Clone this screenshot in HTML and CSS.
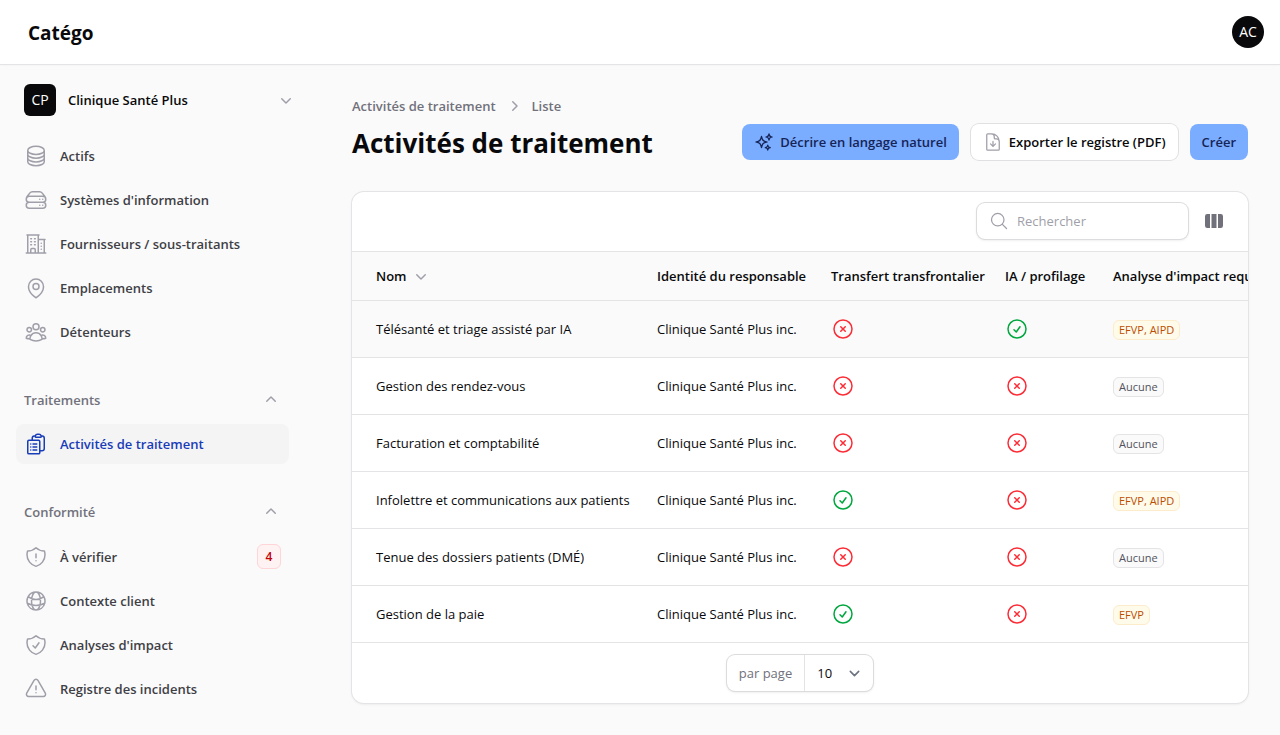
FILE: index.html
```html
<!DOCTYPE html>
<html lang="fr">
<head>
    <meta charset="UTF-8">
    <meta name="viewport" content="width=device-width, initial-scale=1.0">
    <title>Activités de traitement - Catégo</title>
    <link rel="stylesheet" href="styles.css">
</head>
<body>

    <!-- Icons -->
    <svg class="sprite" aria-hidden="true">
        <symbol id="i-stack" viewBox="0 0 24 24"><path d="M20.25 6.375c0 2.278-3.694 4.125-8.25 4.125S3.75 8.653 3.75 6.375m16.5 0c0-2.278-3.694-4.125-8.25-4.125S3.75 4.097 3.75 6.375m16.5 0v11.25c0 2.278-3.694 4.125-8.25 4.125s-8.25-1.847-8.25-4.125V6.375m16.5 0v3.75m-16.5-3.75v3.75m16.5 0v3.75C20.25 16.153 16.556 18 12 18s-8.25-1.847-8.25-4.125v-3.75m16.5 0c0 2.278-3.694 4.125-8.25 4.125s-8.25-1.847-8.25-4.125"/></symbol>
        <symbol id="i-server" viewBox="0 0 24 24"><path d="M5.25 14.25h13.5m-13.5 0a3 3 0 0 1-3-3m3 3a3 3 0 1 0 0 6h13.5a3 3 0 1 0 0-6m-16.5-3a3 3 0 0 1 3-3h13.5a3 3 0 0 1 3 3m-19.5 0a4.5 4.5 0 0 1 .9-2.7L5.737 5.1a3.375 3.375 0 0 1 2.7-1.35h7.126c1.062 0 2.062.5 2.7 1.35l2.587 3.45a4.5 4.5 0 0 1 .9 2.7m0 0a3 3 0 0 1-3 3m0 3h.008v.008h-.008v-.008Zm0-6h.008v.008h-.008v-.008Zm-3 6h.008v.008h-.008v-.008Zm0-6h.008v.008h-.008v-.008Z"/></symbol>
        <symbol id="i-building" viewBox="0 0 24 24"><path d="M2.25 21h19.5m-18-18v18m10.5-18v18m6-13.5V21M6.75 6.75h.75m-.75 3h.75m-.75 3h.75m3-6h.75m-.75 3h.75m-.75 3h.75M6.75 21v-3.375c0-.621.504-1.125 1.125-1.125h2.25c.621 0 1.125.504 1.125 1.125V21M3 3h12m-.75 4.5H21m-3.75 3.75h.008v.008h-.008v-.008Zm0 3h.008v.008h-.008v-.008Zm0 3h.008v.008h-.008v-.008Z"/></symbol>
        <symbol id="i-pin" viewBox="0 0 24 24"><path d="M15 10.5a3 3 0 1 1-6 0 3 3 0 0 1 6 0Z"/><path d="M19.5 10.5c0 7.142-7.5 11.25-7.5 11.25S4.5 17.642 4.5 10.5a7.5 7.5 0 1 1 15 0Z"/></symbol>
        <symbol id="i-users" viewBox="0 0 24 24"><path d="M18 18.72a9.094 9.094 0 0 0 3.741-.479 3 3 0 0 0-4.682-2.72m.94 3.198.001.031c0 .225-.012.447-.037.666A11.944 11.944 0 0 1 12 21c-2.17 0-4.207-.576-5.963-1.584A6.062 6.062 0 0 1 6 18.719m12 0a5.971 5.971 0 0 0-.941-3.197m0 0A5.995 5.995 0 0 0 12 12.75a5.995 5.995 0 0 0-5.058 2.772m0 0a3 3 0 0 0-4.681 2.72 8.986 8.986 0 0 0 3.74.477m.94-3.197a5.971 5.971 0 0 0-.94 3.197M15 6.75a3 3 0 1 1-6 0 3 3 0 0 1 6 0Zm6 3a2.25 2.25 0 1 1-4.5 0 2.25 2.25 0 0 1 4.5 0Zm-13.5 0a2.25 2.25 0 1 1-4.5 0 2.25 2.25 0 0 1 4.5 0Z"/></symbol>
        <symbol id="i-clipboard" viewBox="0 0 24 24"><path d="M9 12h3.75M9 15h3.75M9 18h3.75m3 .75H18a2.25 2.25 0 0 0 2.25-2.25V6.108c0-1.135-.845-2.098-1.976-2.192a48.424 48.424 0 0 0-1.123-.08m-5.801 0c-.065.21-.1.433-.1.664 0 .414.336.75.75.75h4.5a.75.75 0 0 0 .75-.75 2.25 2.25 0 0 0-.1-.664m-5.8 0A2.251 2.251 0 0 1 13.5 2.25H15c1.012 0 1.867.668 2.15 1.586m-5.8 0c-.376.023-.75.05-1.124.08C9.095 4.01 8.25 4.973 8.25 6.108V8.25m0 0H4.875c-.621 0-1.125.504-1.125 1.125v11.25c0 .621.504 1.125 1.125 1.125h9.75c.621 0 1.125-.504 1.125-1.125V9.375c0-.621-.504-1.125-1.125-1.125H8.25ZM6.75 12h.008v.008H6.75V12Zm0 3h.008v.008H6.75V15Zm0 3h.008v.008H6.75V18Z"/></symbol>
        <symbol id="i-shield-alert" viewBox="0 0 24 24"><path d="M12 9v3.75m0-10.036A11.959 11.959 0 0 1 3.598 6 11.99 11.99 0 0 0 3 9.75c0 5.592 3.824 10.29 9 11.622 5.176-1.332 9-6.03 9-11.622 0-1.31-.21-2.57-.598-3.75h-.152c-3.196 0-6.1-1.249-8.25-3.286Zm0 13.036h.008v.008H12v-.008Z"/></symbol>
        <symbol id="i-globe" viewBox="0 0 24 24"><path d="M12 21a9.004 9.004 0 0 0 8.716-6.747M12 21a9.004 9.004 0 0 1-8.716-6.747M12 21c2.485 0 4.5-4.03 4.5-9S14.485 3 12 3m0 18c-2.485 0-4.5-4.03-4.5-9S9.515 3 12 3m0 0a8.997 8.997 0 0 1 7.843 4.582M12 3a8.997 8.997 0 0 0-7.843 4.582m15.686 0A11.953 11.953 0 0 1 12 10.5c-2.998 0-5.74-1.1-7.843-2.918m15.686 0A8.959 8.959 0 0 1 21 12c0 .778-.099 1.533-.284 2.253m0 0A17.919 17.919 0 0 1 12 16.5c-3.162 0-6.133-.815-8.716-2.247m0 0A9.015 9.015 0 0 1 3 12c0-1.605.42-3.113 1.157-4.418"/></symbol>
        <symbol id="i-shield-check" viewBox="0 0 24 24"><path d="M9 12.75 11.25 15 15 9.75m-3-7.036A11.959 11.959 0 0 1 3.598 6 11.99 11.99 0 0 0 3 9.749c0 5.592 3.824 10.29 9 11.623 5.176-1.332 9-6.03 9-11.622 0-1.31-.21-2.571-.598-3.751h-.152c-3.196 0-6.1-1.248-8.25-3.285Z"/></symbol>
        <symbol id="i-warning" viewBox="0 0 24 24"><path d="M12 9v3.75m-9.303 3.376c-.866 1.5.217 3.374 1.948 3.374h14.71c1.73 0 2.813-1.874 1.948-3.374L13.949 3.378c-.866-1.5-3.032-1.5-3.898 0L2.697 16.126ZM12 15.75h.007v.008H12v-.008Z"/></symbol>
        <symbol id="i-sparkles" viewBox="0 0 24 24"><path d="M9.813 15.904 9 18.75l-.813-2.846a4.5 4.5 0 0 0-3.09-3.09L2.25 12l2.846-.813a4.5 4.5 0 0 0 3.09-3.09L9 5.25l.813 2.846a4.5 4.5 0 0 0 3.09 3.09L15.75 12l-2.846.813a4.5 4.5 0 0 0-3.09 3.09ZM18.259 8.715 18 9.75l-.259-1.035a3.375 3.375 0 0 0-2.455-2.456L14.25 6l1.036-.259a3.375 3.375 0 0 0 2.455-2.456L18 2.25l.259 1.035a3.375 3.375 0 0 0 2.456 2.456L21.75 6l-1.035.259a3.375 3.375 0 0 0-2.456 2.456ZM16.894 20.567 16.5 21.75l-.394-1.183a2.25 2.25 0 0 0-1.423-1.423L13.5 18.75l1.183-.394a2.25 2.25 0 0 0 1.423-1.423l.394-1.183.394 1.183a2.25 2.25 0 0 0 1.423 1.423l1.183.394-1.183.394a2.25 2.25 0 0 0-1.423 1.423Z"/></symbol>
        <symbol id="i-download" viewBox="0 0 24 24"><path d="M19.5 14.25v-2.625a3.375 3.375 0 0 0-3.375-3.375h-1.5A1.125 1.125 0 0 1 13.5 7.125v-1.5a3.375 3.375 0 0 0-3.375-3.375H8.25m.75 12 3 3m0 0 3-3m-3 3v-6m-1.5-9H5.625c-.621 0-1.125.504-1.125 1.125v17.25c0 .621.504 1.125 1.125 1.125h12.75c.621 0 1.125-.504 1.125-1.125V11.25a9 9 0 0 0-9-9Z"/></symbol>
        <symbol id="i-search" viewBox="0 0 24 24"><path d="m21 21-5.197-5.197m0 0A7.5 7.5 0 1 0 5.196 5.196a7.5 7.5 0 0 0 10.607 10.607Z"/></symbol>
        <symbol id="i-check" viewBox="0 0 24 24"><path d="M9 12.75 11.25 15 15 9.75M21 12a9 9 0 1 1-18 0 9 9 0 0 1 18 0Z"/></symbol>
        <symbol id="i-cross" viewBox="0 0 24 24"><path d="m9.75 9.75 4.5 4.5m0-4.5-4.5 4.5M21 12a9 9 0 1 1-18 0 9 9 0 0 1 18 0Z"/></symbol>
        <symbol id="i-columns" viewBox="0 0 20 20"><path d="M14 17h2.75A2.25 2.25 0 0 0 19 14.75v-9.5A2.25 2.25 0 0 0 16.75 3H14v14ZM12.5 3h-5v14h5V3ZM3.25 3H6v14H3.25A2.25 2.25 0 0 1 1 14.75v-9.5A2.25 2.25 0 0 1 3.25 3Z"/></symbol>
        <symbol id="i-down" viewBox="0 0 20 20"><path d="M5.22 8.22a.75.75 0 0 1 1.06 0L10 11.94l3.72-3.72a.75.75 0 1 1 1.06 1.06l-4.25 4.25a.75.75 0 0 1-1.06 0L5.22 9.28a.75.75 0 0 1 0-1.06Z"/></symbol>
        <symbol id="i-up" viewBox="0 0 20 20"><path d="M9.47 6.47a.75.75 0 0 1 1.06 0l4.25 4.25a.75.75 0 1 1-1.06 1.06L10 8.06l-3.72 3.72a.75.75 0 0 1-1.06-1.06l4.25-4.25Z"/></symbol>
        <symbol id="i-right" viewBox="0 0 20 20"><path d="M8.22 5.22a.75.75 0 0 1 1.06 0l4.25 4.25a.75.75 0 0 1 0 1.06l-4.25 4.25a.75.75 0 0 1-1.06-1.06L11.94 10 8.22 6.28a.75.75 0 0 1 0-1.06Z"/></symbol>
    </svg>

    <header class="topbar">
        <a class="logo" href="#">Catégo</a>
        <button class="avatar" type="button">AC</button>
    </header>

    <div class="layout">
        <aside class="sidebar">
            <button class="tenant" type="button">
                <span class="tenant-logo">CP</span>
                <span class="tenant-name">Clinique Santé Plus</span>
                <svg class="icon-sm"><use href="#i-down"/></svg>
            </button>

            <nav class="nav">
                <div class="nav-group">
                    <a class="nav-item" href="#"><svg class="icon"><use href="#i-stack"/></svg>Actifs</a>
                    <a class="nav-item" href="#"><svg class="icon"><use href="#i-server"/></svg>Systèmes d'information</a>
                    <a class="nav-item" href="#"><svg class="icon"><use href="#i-building"/></svg>Fournisseurs / sous-traitants</a>
                    <a class="nav-item" href="#"><svg class="icon"><use href="#i-pin"/></svg>Emplacements</a>
                    <a class="nav-item" href="#"><svg class="icon"><use href="#i-users"/></svg>Détenteurs</a>
                </div>

                <div class="nav-group">
                    <button class="nav-label" type="button">Traitements<svg class="icon-sm"><use href="#i-up"/></svg></button>
                    <a class="nav-item active" href="#"><svg class="icon"><use href="#i-clipboard"/></svg>Activités de traitement</a>
                </div>

                <div class="nav-group">
                    <button class="nav-label" type="button">Conformité<svg class="icon-sm"><use href="#i-up"/></svg></button>
                    <a class="nav-item" href="#"><svg class="icon"><use href="#i-shield-alert"/></svg>À vérifier<span class="count">4</span></a>
                    <a class="nav-item" href="#"><svg class="icon"><use href="#i-globe"/></svg>Contexte client</a>
                    <a class="nav-item" href="#"><svg class="icon"><use href="#i-shield-check"/></svg>Analyses d'impact</a>
                    <a class="nav-item" href="#"><svg class="icon"><use href="#i-warning"/></svg>Registre des incidents</a>
                </div>
            </nav>
        </aside>

        <main class="main">
            <div class="page-header">
                <div>
                    <nav class="breadcrumbs">
                        <a href="#">Activités de traitement</a>
                        <svg class="icon-sm"><use href="#i-right"/></svg>
                        <a href="#">Liste</a>
                    </nav>
                    <h1>Activités de traitement</h1>
                </div>
                <div class="actions">
                    <button class="btn btn-primary" type="button"><svg class="icon"><use href="#i-sparkles"/></svg>Décrire en langage naturel</button>
                    <button class="btn btn-outline" type="button"><svg class="icon"><use href="#i-download"/></svg>Exporter le registre (PDF)</button>
                    <button class="btn btn-primary" type="button">Créer</button>
                </div>
            </div>

            <section class="card">
                <div class="toolbar">
                    <label class="search">
                        <svg class="icon"><use href="#i-search"/></svg>
                        <input type="search" placeholder="Rechercher" aria-label="Rechercher">
                    </label>
                    <button class="columns-btn" type="button" aria-label="Colonnes"><svg class="icon-sm"><use href="#i-columns"/></svg></button>
                </div>

                <div class="table-wrap">
                    <table>
                        <colgroup>
                            <col class="col-name">
                            <col class="col-owner">
                            <col class="col-transfer">
                            <col class="col-ai">
                            <col class="col-impact">
                        </colgroup>
                        <thead>
                            <tr>
                                <th><button class="sort" type="button">Nom<svg class="icon-sm"><use href="#i-down"/></svg></button></th>
                                <th>Identité du responsable</th>
                                <th>Transfert transfrontalier</th>
                                <th>IA / profilage</th>
                                <th>Analyse d'impact requise</th>
                            </tr>
                        </thead>
                        <tbody>
                            <tr class="hovered">
                                <td>Télésanté et triage assisté par IA</td>
                                <td>Clinique Santé Plus inc.</td>
                                <td><svg class="icon no"><use href="#i-cross"/></svg></td>
                                <td><svg class="icon yes"><use href="#i-check"/></svg></td>
                                <td><span class="badge badge-warning">EFVP, AIPD</span></td>
                            </tr>
                            <tr>
                                <td>Gestion des rendez-vous</td>
                                <td>Clinique Santé Plus inc.</td>
                                <td><svg class="icon no"><use href="#i-cross"/></svg></td>
                                <td><svg class="icon no"><use href="#i-cross"/></svg></td>
                                <td><span class="badge">Aucune</span></td>
                            </tr>
                            <tr>
                                <td>Facturation et comptabilité</td>
                                <td>Clinique Santé Plus inc.</td>
                                <td><svg class="icon no"><use href="#i-cross"/></svg></td>
                                <td><svg class="icon no"><use href="#i-cross"/></svg></td>
                                <td><span class="badge">Aucune</span></td>
                            </tr>
                            <tr>
                                <td>Infolettre et communications aux patients</td>
                                <td>Clinique Santé Plus inc.</td>
                                <td><svg class="icon yes"><use href="#i-check"/></svg></td>
                                <td><svg class="icon no"><use href="#i-cross"/></svg></td>
                                <td><span class="badge badge-warning">EFVP, AIPD</span></td>
                            </tr>
                            <tr>
                                <td>Tenue des dossiers patients (DMÉ)</td>
                                <td>Clinique Santé Plus inc.</td>
                                <td><svg class="icon no"><use href="#i-cross"/></svg></td>
                                <td><svg class="icon no"><use href="#i-cross"/></svg></td>
                                <td><span class="badge">Aucune</span></td>
                            </tr>
                            <tr>
                                <td>Gestion de la paie</td>
                                <td>Clinique Santé Plus inc.</td>
                                <td><svg class="icon yes"><use href="#i-check"/></svg></td>
                                <td><svg class="icon no"><use href="#i-cross"/></svg></td>
                                <td><span class="badge badge-warning">EFVP</span></td>
                            </tr>
                        </tbody>
                    </table>
                </div>

                <div class="pagination">
                    <div class="per-page">
                        <label for="per-page">par page</label>
                        <select id="per-page">
                            <option>5</option>
                            <option selected>10</option>
                            <option>25</option>
                            <option>50</option>
                        </select>
                    </div>
                </div>
            </section>
        </main>
    </div>

</body>
</html>
```
FILE: styles.css
```css
* {
    box-sizing: border-box;
}
body {
    margin: 0;
    background-color: #fafafa;
    color: #09090b;
    font-family: "Segoe UI", "Open Sans", "Noto Sans", sans-serif;
    font-size: 13px;
    line-height: 20px;
}
a {
    color: inherit;
    text-decoration: none;
}
button, input, select {
    font: inherit;
    color: inherit;
}
button {
    background: none;
    border: none;
    padding: 0;
    cursor: pointer;
}
.sprite {
    display: none;
}
.icon {
    width: 24px;
    height: 24px;
    flex-shrink: 0;
    fill: none;
    stroke: currentColor;
    stroke-width: 1.5;
    stroke-linecap: round;
    stroke-linejoin: round;
}
.icon-sm {
    width: 20px;
    height: 20px;
    flex-shrink: 0;
    fill: #9f9fa9;
}

/* Topbar */
.topbar {
    display: flex;
    align-items: center;
    justify-content: space-between;
    height: 64px;
    padding: 0 16px 0 28px;
    background-color: #fff;
    box-shadow: 0 0 0 1px #e4e4e7, 0 1px 2px rgba(0, 0, 0, 0.05);
}
.logo {
    padding-top: 2px;
    font-size: 19px;
    font-weight: 700;
    line-height: 28px;
}
.avatar {
    width: 32px;
    height: 32px;
    border-radius: 50%;
    background-color: #09090b;
    color: #fff;
    font-size: 14px;
}

/* Sidebar */
.layout {
    display: flex;
}
.sidebar {
    width: 320px;
    flex-shrink: 0;
    padding: 12px 16px 24px;
}
.tenant {
    display: flex;
    align-items: center;
    gap: 12px;
    width: 100%;
    padding: 8px;
    font-weight: 600;
}
.tenant-logo {
    width: 32px;
    border-radius: 6px;
    background-color: #09090b;
    color: #fff;
    font-size: 14px;
    font-weight: 400;
    line-height: 32px;
}
.tenant-name {
    flex: 1;
    text-align: left;
}
.nav {
    display: flex;
    flex-direction: column;
    gap: 28px;
    margin: 12px 15px 0 0;
}
.nav-group {
    display: flex;
    flex-direction: column;
    gap: 4px;
}
.nav-item {
    display: flex;
    align-items: center;
    gap: 12px;
    padding: 8px;
    border-radius: 8px;
    color: #3f3f46;
    font-weight: 600;
}
.nav-item .icon {
    color: #9f9fa9;
}
.nav-item.active {
    background-color: #f4f4f5;
    color: #193cb8;
}
.nav-item.active .icon {
    color: #193cb8;
}
.nav-label {
    display: flex;
    align-items: center;
    justify-content: space-between;
    padding: 10px 8px;
    color: #71717b;
    font-weight: 600;
}
.count {
    min-width: 24px;
    margin-left: auto;
    border: 1px solid #ffd5d7;
    border-radius: 6px;
    background-color: #fef2f2;
    color: #c10007;
    font-size: 12px;
    line-height: 23px;
    text-align: center;
}

/* Page header */
.main {
    flex: 1;
    min-width: 0;
    padding: 32px;
}
.page-header {
    display: flex;
    align-items: center;
    justify-content: space-between;
    gap: 16px;
    margin-bottom: 32px;
}
.breadcrumbs {
    display: flex;
    align-items: center;
    gap: 8px;
    margin-bottom: 10px;
    color: #71717b;
    font-weight: 600;
}
h1 {
    margin: 0;
    font-size: 26px;
    font-weight: 700;
    line-height: 34px;
}
.actions {
    display: flex;
    gap: 12px;
    margin-top: 28px;
}
.btn {
    display: flex;
    align-items: center;
    gap: 6px;
    padding: 8px 12px;
    border-radius: 8px;
    font-weight: 600;
    white-space: nowrap;
}
.btn .icon {
    width: 20px;
    height: 20px;
}
.btn-primary {
    background-color: #7aacff;
    color: #162456;
}
.btn-outline {
    background-color: #fff;
    box-shadow: 0 0 0 1px #e0e0e2;
}
.btn-outline .icon {
    color: #9f9fa9;
}

/* Table card */
.card {
    border-radius: 12px;
    background-color: #fff;
    box-shadow: 0 0 0 1px #e4e4e7, 0 1px 3px rgba(0, 0, 0, 0.1);
    overflow: hidden;
}
.toolbar {
    display: flex;
    align-items: center;
    justify-content: flex-end;
    gap: 16px;
    padding: 11px 24px 12px;
    border-bottom: 1px solid #e4e4e7;
}
.search {
    display: flex;
    align-items: center;
    gap: 8px;
    width: 211px;
    height: 36px;
    padding: 0 12px;
    border-radius: 8px;
    box-shadow: 0 0 0 1px #dcdcde, 0 1px 3px rgba(0, 0, 0, 0.12);
}
.search .icon {
    width: 20px;
    height: 20px;
    color: #9f9fa9;
}
.search input {
    width: 100%;
    padding: 0;
    border: none;
    outline: none;
    background: none;
}
.search input::placeholder {
    color: #9f9fa9;
}
.columns-btn {
    display: flex;
}
.columns-btn .icon-sm {
    fill: #71717b;
}
.table-wrap {
    overflow-x: auto;
    scrollbar-width: none;
}
table {
    width: 100%;
    min-width: 959px;
    table-layout: fixed;
    border-collapse: separate;
    border-spacing: 0;
}
.col-name {
    width: 293px;
}
.col-owner, .col-transfer {
    width: 174px;
}
.col-ai {
    width: 108px;
}
th, td {
    padding: 0 12px;
    border-bottom: 1px solid #e4e4e7;
    text-align: left;
    white-space: nowrap;
}
th {
    height: 49px;
    background-color: #fafafa;
    font-weight: 600;
}
td {
    height: 57px;
}
th:first-child, td:first-child {
    padding-left: 24px;
}
td .icon {
    display: block;
}
.hovered {
    background-color: #fafafa;
}
.sort {
    display: flex;
    align-items: center;
    gap: 4px;
}
.yes {
    color: #00a63e;
}
.no {
    color: #fb2c36;
}
.badge {
    display: inline-block;
    padding: 0 5px;
    border: 1px solid #e4e4e7;
    border-radius: 6px;
    background-color: #fafafa;
    color: #52525c;
    font-size: 11px;
    font-weight: 500;
    line-height: 18px;
}
.badge-warning {
    border-color: #fdeccb;
    background-color: #fffbeb;
    color: #bb4d00;
}

/* Pagination */
.pagination {
    display: flex;
    justify-content: center;
    padding: 12px;
}
.per-page {
    display: flex;
    height: 36px;
    border-radius: 8px;
    box-shadow: 0 0 0 1px #dcdcde, 0 1px 3px rgba(0, 0, 0, 0.12);
}
.per-page label {
    padding: 8px 12px;
    border-right: 1px solid #e4e4e7;
    color: #71717b;
}
.per-page select {
    width: 68px;
    padding: 0 12px;
    border: none;
    appearance: none;
    background: url("data:image/svg+xml,%3Csvg xmlns='http://www.w3.org/2000/svg' fill='none' viewBox='0 0 20 20'%3E%3Cpath stroke='%236b7280' stroke-linecap='round' stroke-linejoin='round' stroke-width='1.5' d='M6 8l4 4 4-4'/%3E%3C/svg%3E") no-repeat right 8px center / 21px;
}
```
